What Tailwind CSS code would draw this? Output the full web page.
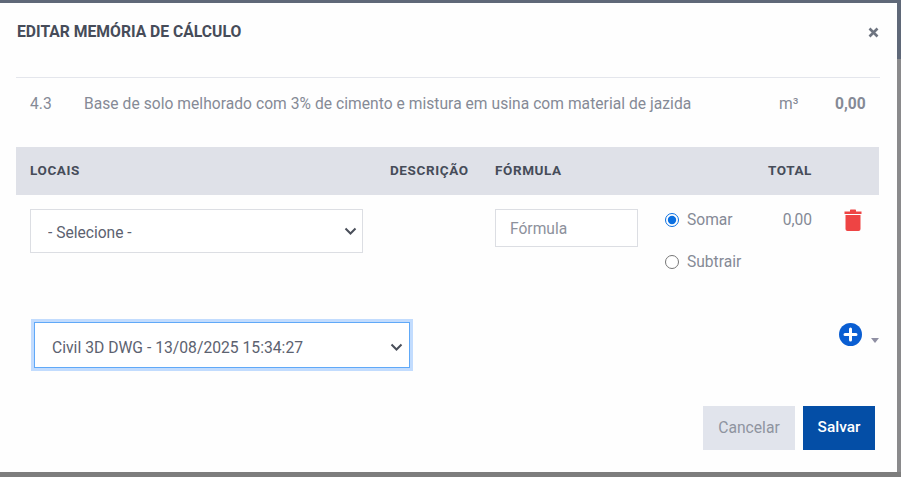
<!DOCTYPE html>
<html lang="pt">
<head>
<meta charset="utf-8">
<script src="https://cdn.jsdelivr.net/npm/@tailwindcss/browser@4"></script>
</head>
<body class="m-0 bg-[#5f6878] font-['Roboto',sans-serif]">
<div class="w-[901px] h-[477px] overflow-hidden flex flex-col">
  <div class="h-[3px] shrink-0 bg-[#5f6878]"></div>
  <div class="flex h-[469px] shrink-0">
    <div class="w-[897px] h-full bg-[#fefefe] pl-4 pr-[17px] flex flex-col">
      <div class="h-[75px] border-b border-[#e4e6ec] flex items-start justify-between shrink-0">
        <h1 class="ml-px mt-[20px] text-[15.7px] leading-[18px] font-bold text-[#464c59]">EDITAR MEMÓRIA DE CÁLCULO</h1>
        <svg class="mt-[24px] mr-px" width="11" height="11" viewBox="0 0 11 11"><path d="M1.5 1.5l8 8M9.5 1.5l-8 8" stroke="#6e7480" stroke-width="2.6" fill="none"/></svg>
      </div>
      <div class="h-[69px] flex items-start text-[15.6px] text-[#858a96] shrink-0 pt-[17px] leading-[18px] tracking-[0.04px]">
        <span class="ml-[14px] w-[54px]">4.3</span>
        <span class="w-[695px] whitespace-nowrap">Base de solo melhorado com 3% de cimento e mistura em usina com material de jazida</span>
        <span class="w-[56px]">m³</span>
        <span class="font-bold">0,00</span>
      </div>
      <div class="h-[48px] w-[863px] bg-[#dfe1e8] grid grid-cols-[360px_105px_317px] items-center pl-[14px] pb-[2px] text-[13.5px] font-bold tracking-[0.6px] text-[#464c59] shrink-0">
        <span>LOCAIS</span>
        <span>DESCRIÇÃO</span>
        <span class="flex justify-between"><span>FÓRMULA</span><span>TOTAL</span></span>
      </div>
      <div class="grid grid-cols-[360px_105px_170px_147px_51px] items-start pl-[14px] pt-[14px] w-[863px] h-[114px] shrink-0 text-[15.6px] text-[#858a96]">
        <div class="relative w-[333px] h-[44px]">
          <select class="appearance-none w-full h-full bg-white border border-[#dcdee3] pl-[17px] pt-[5px] text-[15.6px] text-[#5c6270] outline-none"><option>- Selecione -</option></select>
          <svg class="absolute right-[6px] top-[18px]" width="13" height="9" viewBox="0 0 13 9"><path d="M1.5 1.5l5 5 5-5" stroke="#4a4f5a" stroke-width="2" fill="none"/></svg>
        </div>
        <div></div>
        <input class="w-[143px] h-[38px] bg-white border border-[#dcdee3] pl-[14px] pt-[2px] text-[15.6px] outline-none placeholder:text-[#8d919c]" placeholder="Fórmula">
        <div class="flex items-start justify-between">
          <div class="flex flex-col gap-[24px] pt-[2px] leading-[18px]">
            <label class="flex items-center gap-2"><input type="radio" name="op" checked class="w-[14px] h-[14px] m-0 accent-[#0b6fe0]"><span>Somar</span></label>
            <label class="flex items-center gap-2"><input type="radio" name="op" class="w-[14px] h-[14px] m-0"><span>Subtrair</span></label>
          </div>
          <span class="pt-[2px] leading-[18px]">0,00</span>
        </div>
        <svg class="ml-[32px]" width="18" height="22" viewBox="0 0 17 22"><path d="M0 2.5h5.5V1.2Q5.5 0.5 6.200 0.500h4.600Q11.500 0.500 11.500 1.200V2.500H17V5H0z" fill="#ee4444"/><path d="M1 6h15v14q0 2-2 2H3q-2 0-2-2z" fill="#ee4444"/></svg>
      </div>
      <div class="flex items-start justify-between shrink-0 h-[97px] w-[864px]">
        <div class="ml-[18px] mt-[13px] relative w-[376px] h-[46px] border border-[#60a9f8] ring-[3px] ring-[#c2dcfe]">
          <select class="appearance-none w-full h-full bg-white pl-[17px] pt-[6px] text-[15.7px] text-[#5c6270] outline-none"><option>Civil 3D DWG - 13/08/2025 15:34:27</option></select>
          <svg class="absolute right-[6px] top-[20px]" width="13" height="9" viewBox="0 0 13 9"><path d="M1.5 1.5l5 5 5-5" stroke="#4a4f5a" stroke-width="2" fill="none"/></svg>
        </div>
        <div class="flex items-end gap-[9px] mt-[14px] mr-px">
          <svg width="23" height="23" viewBox="0 0 23 23"><circle cx="11.5" cy="11.5" r="11.5" fill="#0a5ed2"/><path d="M11.500 6v11M6 11.500h11" stroke="#fff" stroke-width="3" stroke-linecap="round"/></svg>
          <svg class="mb-[3px]" width="8" height="5" viewBox="0 0 8 5"><path d="M0 0h8L4 5z" fill="#8f8fa3"/></svg>
        </div>
      </div>
      <div class="flex justify-end gap-2 pr-[5px] shrink-0">
        <button class="w-[92px] h-[44px] bg-[#e1e4ec] text-[#8f94a0] text-[15.7px] font-normal">Cancelar</button>
        <button class="w-[72px] h-[44px] bg-[#044ea6] text-white text-[15.4px] font-medium">Salvar</button>
      </div>
    </div>
    <div class="w-[4px] h-full flex flex-col">
      <div class="h-[56px] bg-[#5f6878]"></div>
      <div class="flex-1 bg-[#8a8a8c]"></div>
    </div>
  </div>
  <div class="flex-1 bg-[#7d7d7d]"></div>
</div>
</body>
</html>
